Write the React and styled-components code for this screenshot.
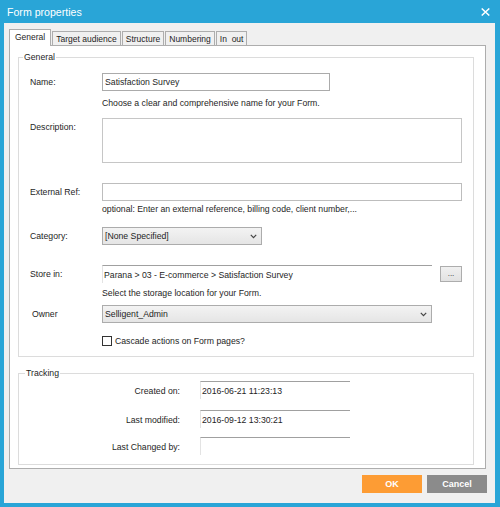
import React from 'react';
import styled, { createGlobalStyle } from 'styled-components';

const Global = createGlobalStyle`
  html, body { margin: 0; padding: 0; }
  body { font-family: "Liberation Sans", Arial, sans-serif; color: #1e1e1e; }
  * { box-sizing: border-box; }
`;

const Window = styled.div`
  width: 500px;
  height: 507px;
  background: #29a5d7;
  display: flex;
  flex-direction: column;
`;

const TitleBar = styled.div`
  height: 23px;
  flex: none;
  display: flex;
  align-items: center;
  justify-content: space-between;
  padding: 0 10px 0 7px;
  color: #fff;
  font-size: 10.6px;
`;

const Frame = styled.div`
  flex: 1;
  padding: 0 5px 4px 4px;
  display: flex;
`;

const Client = styled.div`
  flex: 1;
  background: #f0f0f0;
  display: flex;
  flex-direction: column;
  padding: 6px 8px 10px 5px;
`;

const TabStrip = styled.div`
  display: flex;
  align-items: flex-end;
  height: 16px;
  gap: 1px;
  position: relative;
  z-index: 1;
`;

const Tab = styled.div`
  font-size: 8.5px;
  height: ${p => (p.$active ? '17px' : '14px')};
  margin-bottom: ${p => (p.$active ? '-1px' : '0')};
  padding: ${p => (p.$active ? '0 5px 2px' : '0 3px')};
  background: ${p => (p.$active ? '#fff' : '#f0f0f0')};
  border: 1px solid #adadad;
  border-bottom: none;
  display: flex;
  align-items: center;
  white-space: pre;
`;

const Panel = styled.div`
  height: 424px;
  margin-right: 1px;
  background: #fff;
  border: 1px solid #adadad;
  padding: 11px 11px 9px 8px;
  display: flex;
  flex-direction: column;
  gap: 16px;
`;

const Group = styled.div`
  position: relative;
  border: 1px solid #dcdcdc;
  padding: ${p => p.$pad};
  display: flex;
  flex-direction: column;
`;

const GroupTitle = styled.span`
  position: absolute;
  top: -6px;
  left: ${p => p.$left};
  padding: 0 1px;
  background: #fff;
  font-size: 8.7px;
  line-height: 11px;
`;

const Row = styled.div`
  display: flex;
  align-items: flex-start;
  margin-top: ${p => p.$mt || 0}px;
`;

const Label = styled.div`
  width: 83px;
  flex: none;
  padding-left: ${p => p.$indent || 11}px;
  font-size: 8.7px;
  line-height: 18px;
`;

const Help = styled.div`
  margin-left: 83px;
  margin-top: ${p => p.$mt}px;
  font-size: 8.7px;
  line-height: 12px;
`;

const TextInput = styled.div`
  width: ${p => p.$w}px;
  height: ${p => p.$h || 18}px;
  border: 1px solid ${p => p.$border || '#b4b4b4'};
  background: #fff;
  font-size: 8.7px;
  line-height: 16px;
  padding-left: 2px;
`;

const SunkenField = styled.div`
  width: ${p => p.$w}px;
  height: 18px;
  border-top: 1px solid #a0a0a0;
  border-left: 1px solid #e3e3e3;
  font-size: 8.7px;
  line-height: 18px;
  padding-left: 1px;
`;

const Select = styled.div`
  width: ${p => p.$w}px;
  height: 18px;
  border: 1px solid #acacac;
  background: linear-gradient(#f3f3f3, #e5e5e5);
  font-size: 8.7px;
  display: flex;
  align-items: center;
  justify-content: space-between;
  padding: 0 4px 0 2px;
`;

const Chevron = () => (
  <svg width="7" height="5" viewBox="0 0 7 5">
    <path d="M0.8 0.8 L3.5 3.6 L6.2 0.8" fill="none" stroke="#444" strokeWidth="1.2" />
  </svg>
);

const SmallButton = styled.div`
  width: 22px;
  height: 16px;
  margin: 1px 0 0 8px;
  border: 1px solid #adadad;
  background: linear-gradient(#f0f0f0, #e2e2e2);
  font-size: 8px;
  display: flex;
  align-items: center;
  justify-content: center;
  padding-bottom: 2px;
`;

const CheckRow = styled.div`
  margin: 11px 0 0 83px;
  height: 14px;
  display: flex;
  align-items: center;
  gap: 3px;
  font-size: 8.7px;
`;

const Box = styled.span`
  width: 10px;
  height: 10px;
  border: 1px solid #333;
  background: #fff;
`;

const TrackLabel = styled.div`
  width: 161px;
  margin-right: 20px;
  text-align: right;
  font-size: 8.7px;
  line-height: 20px;
`;

const ButtonRow = styled.div`
  margin-top: 6px;
  display: flex;
  justify-content: flex-end;
  gap: 5px;
`;

const DialogButton = styled.div`
  width: 60px;
  height: 18px;
  background: ${p => p.$bg};
  color: #fff;
  font-weight: bold;
  font-size: 9px;
  display: flex;
  align-items: center;
  justify-content: center;
`;

const tabs = ['General', 'Target audience', 'Structure', 'Numbering', 'In  out'];

export default function App() {
  return (
    <>
      <Global />
      <Window>
        <TitleBar>
          <span>Form properties</span>
          <svg width="9" height="8" viewBox="0 0 9 8">
            <path d="M0.7 0.5 L8.3 7.5 M8.3 0.5 L0.7 7.5" stroke="#fff" strokeWidth="1.5" />
          </svg>
        </TitleBar>
        <Frame>
          <Client>
            <TabStrip>
              {tabs.map((t, i) => (
                <Tab key={t} $active={i === 0}>{t}</Tab>
              ))}
            </TabStrip>
            <Panel>
              <Group $pad="15px 0 8px 0">
                <GroupTitle $left="4px">General</GroupTitle>
                <Row>
                  <Label>Name:</Label>
                  <TextInput $w={228} $border="#ababab">Satisfaction Survey</TextInput>
                </Row>
                <Help $mt={6}>Choose a clear and comprehensive name for your Form.</Help>
                <Row $mt={9}>
                  <Label>Description:</Label>
                  <TextInput $w={360} $h={45} $border="#c6c6c6" />
                </Row>
                <Row $mt={20}>
                  <Label>External Ref:</Label>
                  <TextInput $w={360} $border="#bdbdbd" />
                </Row>
                <Help $mt={2}>optional: Enter an external reference, billing code, client number,...</Help>
                <Row $mt={12}>
                  <Label>Category:</Label>
                  <Select $w={160}>[None Specified]<Chevron /></Select>
                </Row>
                <Row $mt={20}>
                  <Label>Store in:</Label>
                  <SunkenField $w={330}>Parana &gt; 03 - E-commerce &gt; Satisfaction Survey</SunkenField>
                  <SmallButton>...</SmallButton>
                </Row>
                <Help $mt={4}>Select the storage location for your Form.</Help>
                <Row $mt={6}>
                  <Label $indent={13}>Owner</Label>
                  <Select $w={330}>Selligent_Admin<Chevron /></Select>
                </Row>
                <CheckRow>
                  <Box />
                  Cascade actions on Form pages?
                </CheckRow>
              </Group>
              <Group $pad="7px 0 7px 0">
                <GroupTitle $left="6px">Tracking</GroupTitle>
                <Row>
                  <TrackLabel>Created on:</TrackLabel>
                  <SunkenField $w={150}>2016-06-21 11:23:13</SunkenField>
                </Row>
                <Row $mt={9}>
                  <TrackLabel>Last modified:</TrackLabel>
                  <SunkenField $w={150}>2016-09-12 13:30:21</SunkenField>
                </Row>
                <Row $mt={7}>
                  <TrackLabel>Last Changed by:</TrackLabel>
                  <SunkenField $w={150} />
                </Row>
              </Group>
            </Panel>
            <ButtonRow>
              <DialogButton $bg="#fd9c34">OK</DialogButton>
              <DialogButton $bg="#8b8b8b">Cancel</DialogButton>
            </ButtonRow>
          </Client>
        </Frame>
      </Window>
    </>
  );
}
